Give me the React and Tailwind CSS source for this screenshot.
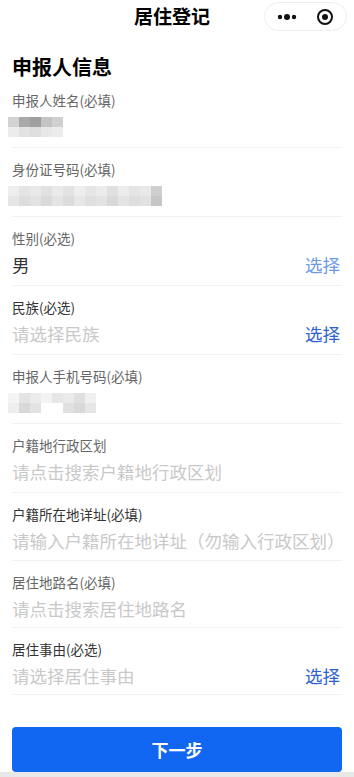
import React from "react";

const fields = [
  { label: "申报人姓名(必填)", blur: "name", h: "h-[69px]" },
  { label: "身份证号码(必填)", blur: "id", h: "h-[69px]" },
  { label: "性别(必选)", value: "男", pick: "text-[#6b9be6]", h: "h-[69px]" },
  { label: "民族(必选)", placeholder: "请选择民族", pick: "text-[#2f62d0]", h: "h-[69px]", dark: true },
  { label: "申报人手机号码(必填)", blur: "phone", h: "h-[69px]" },
  { label: "户籍地行政区划", placeholder: "请点击搜索户籍地行政区划", h: "h-[69px]" },
  { label: "户籍所在地详址(必填)", placeholder: "请输入户籍所在地详址（勿输入行政区划）", h: "h-[68px]", dark: true },
  { label: "居住地路名(必填)", placeholder: "请点击搜索居住地路名", h: "h-[67px]" },
  { label: "居住事由(必选)", placeholder: "请选择居住事由", pick: "text-[#2f62d0]", h: "h-[67px]", dark: true },
];

// pixelated blocks standing in for the blurred personal data
const blurs = {
  name: [
    ["bg-[#d2d2d2]", "bg-[#a9a9a9]", "bg-[#9f9f9f]", "bg-[#c4c4c4]", "bg-[#d0d0d0]"],
    ["bg-[#ececec]", "bg-[#e2e2e2]", "bg-[#dedede]", "bg-[#e8e8e8]", "bg-[#ececec]"],
  ],
  id: [
    ["bg-[#eeeeee]", "bg-[#e4e4e4]", "bg-[#e9e9e9]", "bg-[#e1e1e1]", "bg-[#eaeaea]", "bg-[#e3e3e3]", "bg-[#eeeeee]", "bg-[#e6e6e6]", "bg-[#ebebeb]", "bg-[#e0e0e0]", "bg-[#ececec]", "bg-[#e5e5e5]", "bg-[#e9e9e9]", "bg-[#cfcfcf]"],
    ["bg-[#e6e6e6]", "bg-[#dddddd]", "bg-[#e2e2e2]", "bg-[#dadada]", "bg-[#e4e4e4]", "bg-[#dcdcdc]", "bg-[#e7e7e7]", "bg-[#dfdfdf]", "bg-[#e3e3e3]", "bg-[#d9d9d9]", "bg-[#e4e4e4]", "bg-[#dedede]", "bg-[#e2e2e2]", "bg-[#c6c6c6]"],
  ],
  phone: [
    ["bg-[#f4f4f4]", "bg-[#e4e4e4]", "bg-[#ececec]", "bg-[#f3f3f3]", "bg-[#e6e6e6]", "bg-[#eaeaea]", "bg-[#e0e0e0]", "bg-[#f0f0f0]", "bg-[#ffffff]"],
    ["bg-[#eeeeee]", "bg-[#d8d8d8]", "bg-[#e3e3e3]", "bg-[#ffffff]", "bg-[#ffffff]", "bg-[#e0e0e0]", "bg-[#d9d9d9]", "bg-[#e6e6e6]", "bg-[#ffffff]"],
  ],
};

function Blur({ kind }) {
  return (
    <div className="-ml-1 flex flex-col">
      {blurs[kind].map((row, i) => (
        <div key={i} className="flex">
          {row.map((c, j) => (
            <div key={j} className={`h-[10px] w-[11px] ${c}`} />
          ))}
        </div>
      ))}
    </div>
  );
}

function Field({ field }) {
  return (
    <div className={`${field.h} border-b border-[#f1f1f1] pt-[11px]`}>
      <div className={`h-5 text-[13.5px] leading-5 ${field.dark ? "text-[#333]" : "text-[#666]"}`}>
        {field.label}
      </div>
      <div className="mt-[3px] flex h-[28px] items-center justify-between pr-[2px]">
        {field.blur && <Blur kind={field.blur} />}
        {field.value && <span className="text-[17.5px] text-[#333]">{field.value}</span>}
        {field.placeholder && <span className="text-[17.5px] text-[#c9c9c9]">{field.placeholder}</span>}
        {field.pick && <span className={`text-[17.5px] ${field.pick}`}>选择</span>}
      </div>
    </div>
  );
}

export default function App() {
  return (
    <div
      className="flex h-[777px] w-[354px] flex-col bg-white"
      style={{ fontFamily: '"Noto Sans CJK SC", "Noto Sans", sans-serif' }}
    >
      <div className="relative flex h-[33px] items-center justify-center pr-[10px]">
        <h1 className="text-[19px] font-bold text-black">居住登记</h1>
        <div className="absolute right-[7px] top-[2px] flex h-[29px] w-[83px] items-center justify-between rounded-full border border-[#eeeeee] pl-[12px] pr-[12px]">
          <svg width="20" height="8" viewBox="0 0 20 8">
            <circle cx="3" cy="4" r="2.2" fill="#111" />
            <circle cx="10" cy="4" r="3" fill="#111" />
            <circle cx="17" cy="4" r="2.2" fill="#111" />
          </svg>
          <svg width="18" height="18" viewBox="0 0 18 18">
            <circle cx="9" cy="9" r="7" fill="none" stroke="#111" strokeWidth="2" />
            <circle cx="9" cy="9" r="3" fill="#111" />
          </svg>
        </div>
      </div>

      <div className="px-3">
        <h2 className="mt-[21px] h-[25px] text-[20px] font-bold leading-[25px] text-black">申报人信息</h2>
        {fields.map((field) => (
          <Field key={field.label} field={field} />
        ))}
      </div>

      <div className="mt-[32px] px-3">
        <button className="flex h-[45px] w-full items-center justify-center rounded-[4px] bg-[#1167f2] text-[17px] font-bold text-white">
          下一步
        </button>
      </div>
      <div className="mt-auto h-[5px] bg-[#e8e8e8]" />
    </div>
  );
}
